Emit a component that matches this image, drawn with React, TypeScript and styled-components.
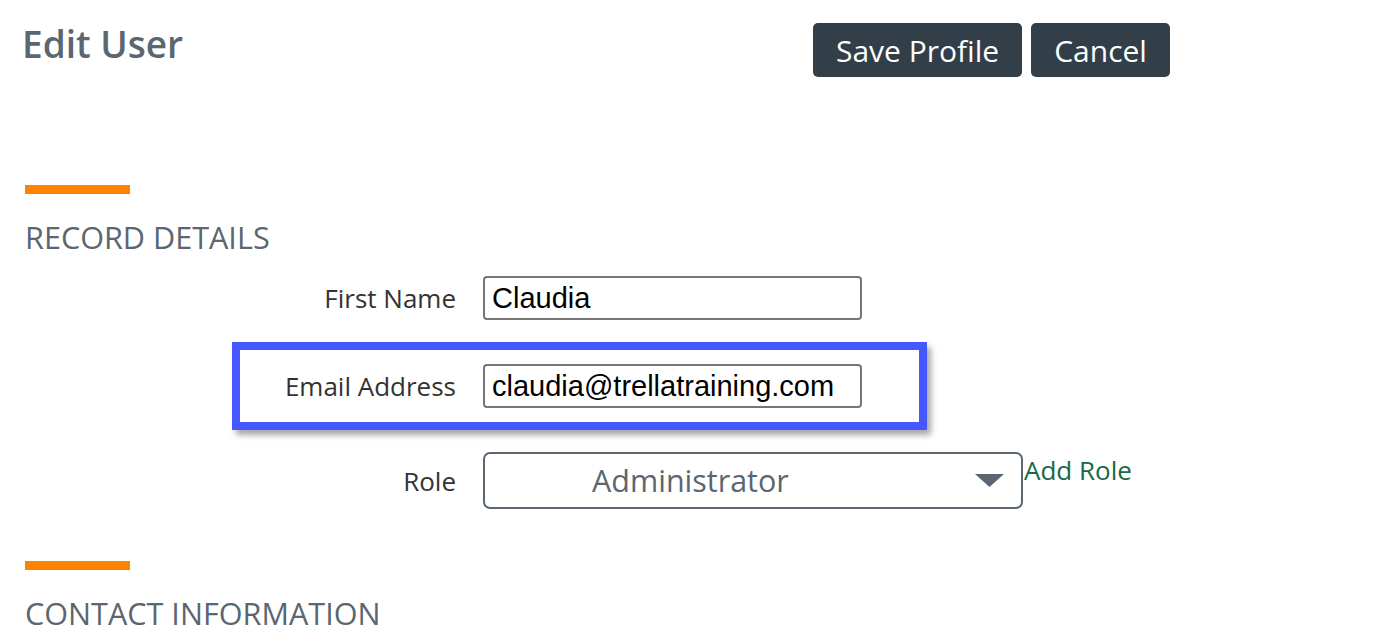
import React from "react";
import styled, { createGlobalStyle } from "styled-components";

const Global = createGlobalStyle`
  html, body { margin: 0; padding: 0; background: #ffffff; }
  body { font-family: "Open Sans", "Noto Sans", sans-serif; }
  * { box-sizing: border-box; }
`;

const Page = styled.div`
  padding-left: 23px;
  width: 1400px;
  height: 632px;
  overflow: hidden;
`;

const Header = styled.header`
  display: flex;
  align-items: flex-start;
`;

const Title = styled.h1`
  margin: 22px 0 0 -1px;
  width: 791px;
  font-size: 37px;
  line-height: 44px;
  font-weight: 600;
  color: #5b6670;
`;

const Actions = styled.div`
  display: flex;
  gap: 9px;
  margin-top: 23px;
`;

const Button = styled.button`
  height: 54px;
  padding: 2px 23px 1px;
  border: none;
  border-radius: 5px;
  background: #323e48;
  color: #ffffff;
  font-family: "Open Sans", sans-serif;
  font-size: 30px;
  line-height: 51px;
  cursor: pointer;
`;

const Accent = styled.div<{ $top: number }>`
  width: 105px;
  height: 9px;
  margin: ${(p) => p.$top}px 0 0 2px;
  background: #ff8200;
`;

const SectionTitle = styled.h2`
  margin: 23px 0 0 2px;
  font-size: 30.6px;
  line-height: 40px;
  font-weight: 400;
  color: #5b6670;
`;

const Form = styled.div`
  display: flex;
  flex-direction: column;
  gap: 44px;
  margin-top: 19px;
`;

const Row = styled.div`
  position: relative;
  display: grid;
  grid-template-columns: 433px auto auto;
  justify-content: start;
  align-items: center;
  column-gap: 27px;
`;

const Label = styled.label`
  text-align: right;
  font-size: 26px;
  line-height: 44px;
  color: #333333;
`;

const TextInput = styled.input`
  width: 379px;
  height: 44px;
  padding: 0 7px;
  border: 2px solid #767676;
  border-radius: 4px;
  font-family: "Liberation Sans", Arial, sans-serif;
  font-size: 29px;
  color: #000000;
  background: #ffffff;
  position: relative;
  z-index: 1;
`;

const Highlight = styled.div`
  position: absolute;
  left: 209px;
  top: -22px;
  width: 695px;
  height: 88px;
  border: 8px solid #4657ff;
  box-shadow: 4px 5px 6px rgba(0, 0, 0, 0.35);
  pointer-events: none;
`;

const Select = styled.div`
  position: relative;
  width: 540px;
  height: 57px;
  padding-left: 107px;
  border: 2px solid #5b6670;
  border-radius: 7px;
  font-size: 30.5px;
  line-height: 53px;
  color: #5b6670;
`;

const Caret = styled.svg`
  position: absolute;
  right: 17px;
  top: 20px;
`;

const AddRole = styled.a`
  align-self: start;
  margin-left: -26px;
  margin-top: 0;
  font-size: 26px;
  line-height: 36px;
  color: #17694a;
  text-decoration: none;
`;

export default function App() {
  return (
    <>
      <Global />
      <Page>
        <Header>
          <Title>Edit User</Title>
          <Actions>
            <Button>Save Profile</Button>
            <Button>Cancel</Button>
          </Actions>
        </Header>

        <Accent $top={108} />
        <SectionTitle>RECORD DETAILS</SectionTitle>

        <Form>
          <Row>
            <Label>First Name</Label>
            <TextInput defaultValue="Claudia" />
          </Row>
          <Row>
            <Highlight />
            <Label>Email Address</Label>
            <TextInput defaultValue="claudia@trellatraining.com" />
          </Row>
          <Row>
            <Label>Role</Label>
            <Select>
              Administrator
              <Caret width="29" height="13" viewBox="0 0 29 13">
                <path d="M0 0 H29 L14.5 13 Z" fill="#5b6670" />
              </Caret>
            </Select>
            <AddRole href="#">Add Role</AddRole>
          </Row>
        </Form>

        <Accent $top={52} />
        <SectionTitle>CONTACT INFORMATION</SectionTitle>
      </Page>
    </>
  );
}
